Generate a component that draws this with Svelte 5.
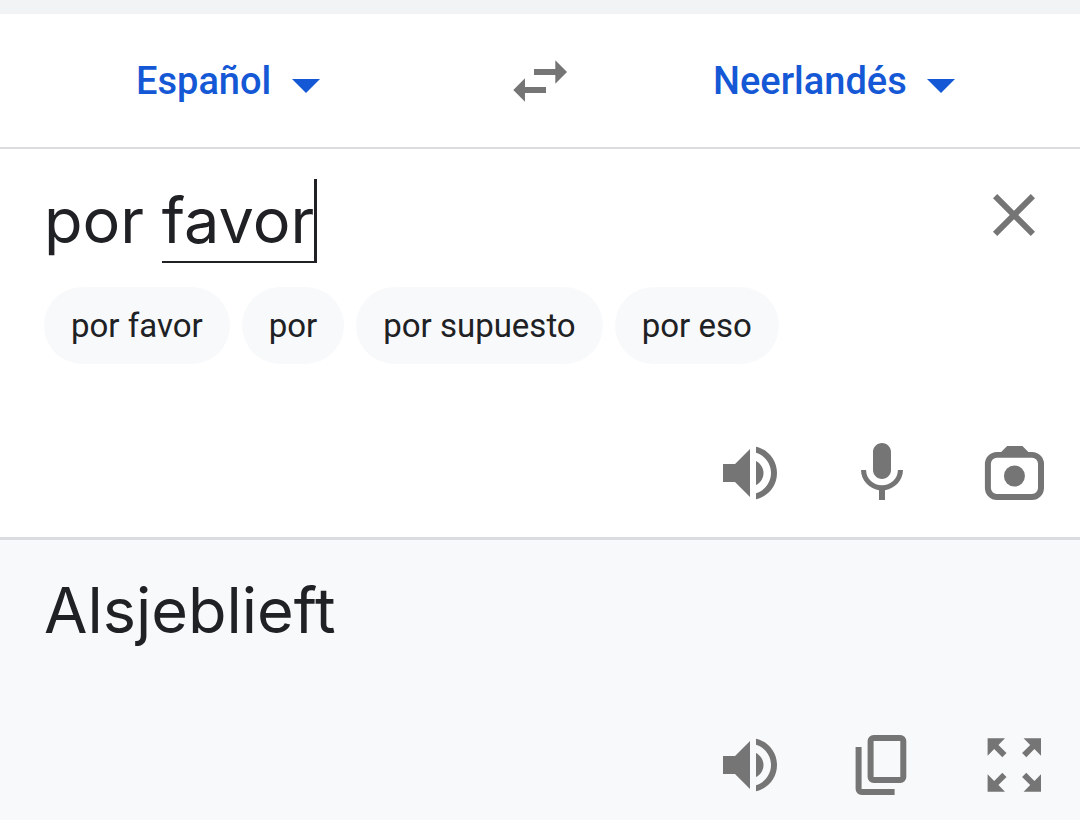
<script lang="ts">
  let source = $state('por favor');
  let translation = $state('Alsjeblieft');

  const suggestions = ['por favor', 'por', 'por supuesto', 'por eso'];

  // the word being typed gets the underline and the caret
  let lastWord = $derived(source.slice(source.lastIndexOf(' ') + 1));
  let before = $derived(source.slice(0, source.length - lastWord.length));
</script>

{#snippet speaker()}
  <svg class="icon" viewBox="0 0 24 24" aria-hidden="true">
    <path d="M3 9v6h4l5 5V4L7 9H3zM16.5 12c0-1.77-1.02-3.29-2.5-4.03v8.05c1.48-.73 2.5-2.25 2.5-4.02zM14 3.23v2.06c2.89.86 5 3.54 5 6.71s-2.11 5.85-5 6.71v2.06c4.01-.91 7-4.49 7-8.77s-2.99-7.86-7-8.77z" />
  </svg>
{/snippet}

{#snippet language(name, label)}
  <div class="language">
    <select aria-label={label}>
      <option>{name}</option>
    </select>
    <svg class="arrow" viewBox="0 0 28 14" aria-hidden="true">
      <path d="M0 0h28L14 14z" />
    </svg>
  </div>
{/snippet}

<main class="translator">
  <header class="languages">
    {@render language('Español', 'Idioma de origen')}
    <button class="icon-button" aria-label="Intercambiar idiomas">
      <svg class="icon" viewBox="0 0 24 24" aria-hidden="true">
        <path d="M6.99 11.1L3.1 15l3.89 3.9V16H14v-2H6.99v-2.9zM21 9l-3.9-3.9V8H10v2h7.1v2.9L21 9z" />
      </svg>
    </button>
    {@render language('Neerlandés', 'Idioma de destino')}
  </header>

  <section class="source">
    <div class="entry">
      <div class="field">
        <textarea class="phrase" rows="1" spellcheck="false" aria-label="Texto de origen" bind:value={source}></textarea>
        <div class="phrase composing" aria-hidden="true">{before}<span>{lastWord}</span></div>
      </div>
      <button class="icon-button" aria-label="Borrar texto" onclick={() => (source = '')}>
        <svg class="icon" viewBox="0 0 24 24" aria-hidden="true">
          <path d="M19 6.41L17.59 5 12 10.59 6.41 5 5 6.41 10.59 12 5 17.59 6.41 19 12 13.41 17.59 19 19 17.59 13.41 12z" />
        </svg>
      </button>
    </div>

    <div class="chips">
      {#each suggestions as suggestion}
        <button class="chip" onclick={() => (source = suggestion)}>{suggestion}</button>
      {/each}
    </div>

    <div class="tools">
      <button class="icon-button" aria-label="Escuchar">{@render speaker()}</button>
      <button class="icon-button" aria-label="Hablar">
        <svg class="icon" viewBox="0 0 24 24" aria-hidden="true">
          <path d="M12 14c1.66 0 3-1.34 3-3V5c0-1.66-1.34-3-3-3S9 3.34 9 5v6c0 1.66 1.34 3 3 3zM17.3 11c0 3-2.54 5.1-5.3 5.1S6.7 14 6.7 11H5c0 3.41 2.72 6.23 6 6.72V21h2v-3.28c3.28-.48 6-3.3 6-6.72h-1.7z" />
        </svg>
      </button>
      <button class="icon-button" aria-label="Cámara">
        <svg class="icon" viewBox="0 0 24 24" aria-hidden="true">
          <path fill-rule="evenodd" d="M7.7 5l2-2h5.1l2 2H18a4 4 0 0 1 4 4v8a4 4 0 0 1-4 4H6.3a4 4 0 0 1-4-4V9a4 4 0 0 1 4-4zM6.3 6.9a2 2 0 0 0-2 2V17a2 2 0 0 0 2 2H18a2 2 0 0 0 2-2V8.9a2 2 0 0 0-2-2z" />
          <circle cx="12.15" cy="13" r="3.5" />
        </svg>
      </button>
    </div>
  </section>

  <section class="result">
    <p class="phrase" lang="nl">{translation}</p>

    <div class="tools">
      <button class="icon-button" aria-label="Escuchar la traducción">{@render speaker()}</button>
      <button class="icon-button" aria-label="Copiar">
        <svg class="icon" viewBox="0 0 24 24" aria-hidden="true">
          <path d="M3.2 6h2v14h11v2h-11a2 2 0 0 1-2-2z" />
          <path fill-rule="evenodd" d="M9.2 2h8.9a2 2 0 0 1 2 2v12a2 2 0 0 1-2 2H9.2a2 2 0 0 1-2-2V4a2 2 0 0 1 2-2zM9.2 4v12h8.9V4z" />
        </svg>
      </button>
      <button class="icon-button" aria-label="Pantalla completa">
        <svg class="icon" viewBox="0 0 24 24" aria-hidden="true">
          <path d="M3.2 3.1H9L6.8 5.3 9.5 8 8.1 9.4 5.4 6.7 3.2 8.9zM21 3.1v5.8l-2.2-2.2-2.7 2.7L14.7 8l2.7-2.7-2.2-2.2zM3.2 20.9v-5.8l2.2 2.2 2.7-2.7L9.5 16l-2.7 2.7L9 20.9zM21 20.9h-5.8l2.2-2.2-2.7-2.7 1.4-1.4 2.7 2.7 2.2-2.2z" />
        </svg>
      </button>
    </div>
  </section>
</main>

<style>
  :global(body) {
    background: #f8f9fb;
  }

  .translator {
    display: flex;
    flex-direction: column;
    min-height: 100vh;
    box-sizing: border-box;
    border-top: 14px solid #f1f3f4;
    font-family: Roboto, 'Liberation Sans', sans-serif;
    color: #202124;
  }

  button,
  select,
  textarea {
    margin: 0;
    padding: 0;
    border: 0;
    background: none;
    font-family: inherit;
    color: inherit;
  }

  button,
  select {
    cursor: pointer;
  }

  .icon-button {
    flex: none;
    width: 72px;
    height: 72px;
    color: #757575;
  }

  .icon {
    display: block;
    width: 100%;
    height: 100%;
    fill: currentColor;
  }

  .languages {
    display: grid;
    grid-template-columns: 1fr 72px 1fr;
    align-items: center;
    height: 133px;
    border-bottom: 2px solid #dadce0;
    background: #fff;
  }

  .language {
    display: flex;
    align-items: center;
    justify-content: center;
    gap: 20px;
    padding-right: 48px;
    color: #1558d6;
  }

  .language:last-child {
    padding: 0 0 0 12px;
  }

  select {
    appearance: none;
    font-size: 38px;
    font-weight: 500;
    line-height: 48px;
  }

  .arrow {
    width: 28px;
    height: 14px;
    margin-top: 10px;
    fill: currentColor;
  }

  .source {
    padding: 30px 30px 28px 44px;
    border-bottom: 3px solid #dadce0;
    background: #fff;
  }

  .entry {
    display: flex;
    align-items: flex-start;
    gap: 24px;
  }

  .field {
    display: grid;
    flex: 1;
    min-width: 0;
  }

  .phrase {
    margin: 0;
    font-family: Inter, 'Liberation Sans', sans-serif;
    font-size: 63px;
    line-height: 82px;
  }

  .field .phrase {
    grid-area: 1 / 1;
  }

  textarea {
    width: 100%;
    height: 84px;
    overflow: hidden;
    resize: none;
    outline: none;
    caret-color: transparent;
  }

  .composing {
    color: transparent;
    white-space: pre-wrap;
    pointer-events: none;
  }

  .composing span {
    display: inline-block;
    border-right: 3px solid #202124;
    border-bottom: 2px solid #202124;
  }

  .chips {
    display: flex;
    flex-wrap: wrap;
    gap: 12px;
    margin-top: 24px;
  }

  .chip {
    height: 77px;
    padding: 0 27px;
    border-radius: 39px;
    background: #f8f9fb;
    font-size: 33px;
  }

  .tools {
    display: flex;
    justify-content: flex-end;
    gap: 60px;
    margin-top: 73px;
  }

  .result {
    display: flex;
    flex: 1;
    flex-direction: column;
    justify-content: space-between;
    padding: 29px 30px 19px 44px;
  }
</style>
